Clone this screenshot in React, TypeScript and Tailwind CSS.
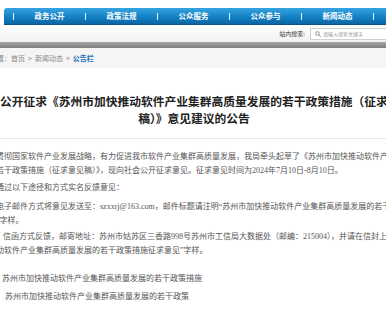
const NAV = ['政务公开', '政策法规', '公众服务', '公众参与', '新闻动态', '互动交流'];

export default function App() {
  return (
    <div className="h-[328px] w-[386px] overflow-hidden bg-white font-['Noto_Sans_CJK_SC',sans-serif]">
      <div className="-ml-[36px] w-[460px]">
        {/* top nav */}
        <div className="h-2" />
        <div className="ml-[40px] flex h-[17px] rounded-tl-[3px] border-b border-[#07558a] bg-gradient-to-b from-[#36a4e2] via-[#1585c8] to-[#0b66a4] pl-[9px]">
          {NAV.map((item) => (
            <div key={item} className="flex w-[72px] shrink-0 items-center">
              <span className="h-[7px] w-px bg-white/90" />
              <span className="flex-1 text-center text-[7.5px] leading-none font-bold text-white">{item}</span>
            </div>
          ))}
        </div>

        {/* search row */}
        <div className="flex h-[17px] items-center justify-end bg-gradient-to-b from-white to-[#f1f1f1]">
          <span className="text-[6px] leading-none text-[#333]">站内搜索:</span>
          <div className="ml-[5px] flex h-[12px] w-[114px] items-center border border-[#cfcfcf] bg-white pl-[4px]">
            <svg width="6" height="6" viewBox="0 0 12 12" fill="none" stroke="#777" strokeWidth="1.6">
              <circle cx="5" cy="5" r="3.6" />
              <path d="M7.7 7.7 11 11" strokeLinecap="round" />
            </svg>
            <span className="ml-[2px] text-[5px] leading-none text-[#999]">请输入搜索关键字</span>
          </div>
        </div>

        <div className="h-[6px] bg-gradient-to-b from-[#a9a9a9] to-[#7e7e7e]" />

        {/* breadcrumb */}
        <div className="flex h-[20px] items-center bg-[#f5f5f5] pl-[12px] text-[7px] leading-none text-[#888]">
          <span>当前位置：</span>
          <span>首页</span>
          <span className="mx-[3px]">&gt;</span>
          <span>新闻动态</span>
          <span className="mx-[3px]">&gt;</span>
          <span className="font-bold text-[#1b6fb8]">公告栏</span>
        </div>

        {/* title */}
        <h1 className="whitespace-nowrap pt-[24px] text-center text-[11.75px] leading-[17px] font-bold text-[#222]">
          关于公开征求《苏州市加快推动软件产业集群高质量发展的若干政策措施（征求意见
          <br />
          稿）》意见建议的公告
        </h1>
        <div className="mt-[12px] border-t border-[#e8e8e8]" />

        {/* body */}
        <div className="whitespace-nowrap pt-[11px] pl-[32px] font-['Liberation_Serif','Noto_Sans_CJK_SC',serif] text-[8px] leading-[14px] text-[#555]">
          <p>贯彻国家软件产业发展战略，有力促进我市软件产业集群高质量发展，我局牵头起草了《苏州市加快推动软件产业集群高质量发展的</p>
          <p>若干政策措施（征求意见稿）》，现向社会公开征求意见。征求意见时间为2024年7月10日-8月10日。</p>
          <p className="mt-[3px]">通过以下途径和方式实名反馈意见：</p>
          <p className="mt-[5px]">电子邮件方式将意见发送至：szxxrj@163.com，邮件标题请注明“苏州市加快推动软件产业集群高质量发展的若干政策</p>
          <p>”字样。</p>
          <p className="mt-[2px] pl-[7px]">信函方式反馈，邮寄地址：苏州市姑苏区三香路998号苏州市工信局大数据处（邮编：215004），并请在信封上注明“苏州市加快推</p>
          <p>动软件产业集群高质量发展的若干政策措施征求意见”字样。</p>
          <p className="mt-[14px] pl-[6px]">苏州市加快推动软件产业集群高质量发展的若干政策措施</p>
          <p className="mt-[4px] pl-[9px]">苏州市加快推动软件产业集群高质量发展的若干政策</p>
        </div>
      </div>
    </div>
  );
}
